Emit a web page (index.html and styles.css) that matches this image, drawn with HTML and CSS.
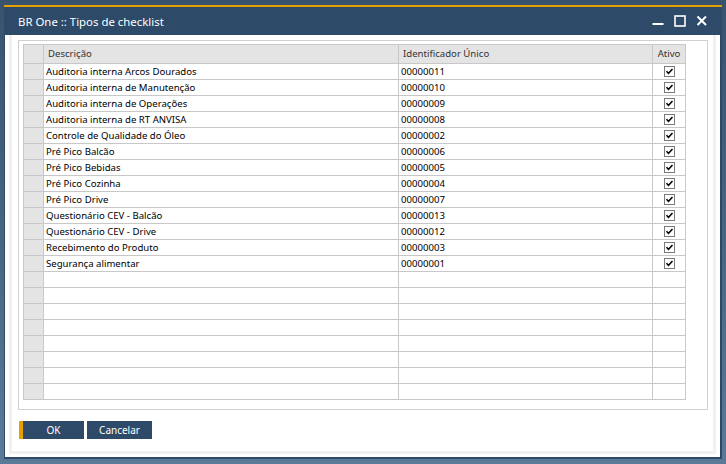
FILE: index.html
```html
<!DOCTYPE html>
<html lang="pt">
<head>
<meta charset="utf-8">
<title>BR One :: Tipos de checklist</title>
<link rel="stylesheet" href="styles.css">
</head>
<body>
<div class="window">
  <div class="titlebar">
    <span class="title">BR One :: Tipos de checklist</span>
    <div class="controls">
      <svg class="ctl" width="12" height="12" viewBox="0 0 12 12"><rect x="0.5" y="8" width="11" height="2" fill="#fff"/></svg>
      <svg class="ctl" width="12" height="12" viewBox="0 0 12 12"><rect x="1" y="1" width="10" height="10" fill="none" stroke="#fff" stroke-width="1.6"/></svg>
      <svg class="ctl" width="12" height="12" viewBox="0 0 12 12"><path d="M1.5 1.5 L10 10 M10 1.5 L1.5 10" stroke="#fff" stroke-width="2" fill="none"/></svg>
    </div>
  </div>
  <div class="client">
    <div class="frame">
      <div class="gridbox">
        <div class="grid">
          <div class="cell rh"></div>
          <div class="cell hd">Descrição</div>
          <div class="cell hd">Identificador Único</div>
          <div class="cell hd center">Ativo</div>

          <div class="cell rh"></div><div class="cell">Auditoria interna Arcos Dourados</div><div class="cell">00000011</div><div class="cell chk"><svg class="cb" width="11" height="11" viewBox="0 0 11 11"><rect x="0.5" y="0.5" width="10" height="10" fill="#fff" stroke="#7a7a7a"/><path d="M2.5 5.2 L4.5 7.3 L8.5 3" fill="none" stroke="#000" stroke-width="1.5"/></svg></div>
          <div class="cell rh"></div><div class="cell">Auditoria interna de Manutenção</div><div class="cell">00000010</div><div class="cell chk"><svg class="cb" width="11" height="11" viewBox="0 0 11 11"><rect x="0.5" y="0.5" width="10" height="10" fill="#fff" stroke="#7a7a7a"/><path d="M2.5 5.2 L4.5 7.3 L8.5 3" fill="none" stroke="#000" stroke-width="1.5"/></svg></div>
          <div class="cell rh"></div><div class="cell">Auditoria interna de Operações</div><div class="cell">00000009</div><div class="cell chk"><svg class="cb" width="11" height="11" viewBox="0 0 11 11"><rect x="0.5" y="0.5" width="10" height="10" fill="#fff" stroke="#7a7a7a"/><path d="M2.5 5.2 L4.5 7.3 L8.5 3" fill="none" stroke="#000" stroke-width="1.5"/></svg></div>
          <div class="cell rh"></div><div class="cell">Auditoria interna de RT ANVISA</div><div class="cell">00000008</div><div class="cell chk"><svg class="cb" width="11" height="11" viewBox="0 0 11 11"><rect x="0.5" y="0.5" width="10" height="10" fill="#fff" stroke="#7a7a7a"/><path d="M2.5 5.2 L4.5 7.3 L8.5 3" fill="none" stroke="#000" stroke-width="1.5"/></svg></div>
          <div class="cell rh"></div><div class="cell">Controle de Qualidade do Óleo</div><div class="cell">00000002</div><div class="cell chk"><svg class="cb" width="11" height="11" viewBox="0 0 11 11"><rect x="0.5" y="0.5" width="10" height="10" fill="#fff" stroke="#7a7a7a"/><path d="M2.5 5.2 L4.5 7.3 L8.5 3" fill="none" stroke="#000" stroke-width="1.5"/></svg></div>
          <div class="cell rh"></div><div class="cell">Pré Pico Balcão</div><div class="cell">00000006</div><div class="cell chk"><svg class="cb" width="11" height="11" viewBox="0 0 11 11"><rect x="0.5" y="0.5" width="10" height="10" fill="#fff" stroke="#7a7a7a"/><path d="M2.5 5.2 L4.5 7.3 L8.5 3" fill="none" stroke="#000" stroke-width="1.5"/></svg></div>
          <div class="cell rh"></div><div class="cell">Pré Pico Bebidas</div><div class="cell">00000005</div><div class="cell chk"><svg class="cb" width="11" height="11" viewBox="0 0 11 11"><rect x="0.5" y="0.5" width="10" height="10" fill="#fff" stroke="#7a7a7a"/><path d="M2.5 5.2 L4.5 7.3 L8.5 3" fill="none" stroke="#000" stroke-width="1.5"/></svg></div>
          <div class="cell rh"></div><div class="cell">Pré Pico Cozinha</div><div class="cell">00000004</div><div class="cell chk"><svg class="cb" width="11" height="11" viewBox="0 0 11 11"><rect x="0.5" y="0.5" width="10" height="10" fill="#fff" stroke="#7a7a7a"/><path d="M2.5 5.2 L4.5 7.3 L8.5 3" fill="none" stroke="#000" stroke-width="1.5"/></svg></div>
          <div class="cell rh"></div><div class="cell">Pré Pico Drive</div><div class="cell">00000007</div><div class="cell chk"><svg class="cb" width="11" height="11" viewBox="0 0 11 11"><rect x="0.5" y="0.5" width="10" height="10" fill="#fff" stroke="#7a7a7a"/><path d="M2.5 5.2 L4.5 7.3 L8.5 3" fill="none" stroke="#000" stroke-width="1.5"/></svg></div>
          <div class="cell rh"></div><div class="cell">Questionário CEV - Balcão</div><div class="cell">00000013</div><div class="cell chk"><svg class="cb" width="11" height="11" viewBox="0 0 11 11"><rect x="0.5" y="0.5" width="10" height="10" fill="#fff" stroke="#7a7a7a"/><path d="M2.5 5.2 L4.5 7.3 L8.5 3" fill="none" stroke="#000" stroke-width="1.5"/></svg></div>
          <div class="cell rh"></div><div class="cell">Questionário CEV - Drive</div><div class="cell">00000012</div><div class="cell chk"><svg class="cb" width="11" height="11" viewBox="0 0 11 11"><rect x="0.5" y="0.5" width="10" height="10" fill="#fff" stroke="#7a7a7a"/><path d="M2.5 5.2 L4.5 7.3 L8.5 3" fill="none" stroke="#000" stroke-width="1.5"/></svg></div>
          <div class="cell rh"></div><div class="cell">Recebimento do Produto</div><div class="cell">00000003</div><div class="cell chk"><svg class="cb" width="11" height="11" viewBox="0 0 11 11"><rect x="0.5" y="0.5" width="10" height="10" fill="#fff" stroke="#7a7a7a"/><path d="M2.5 5.2 L4.5 7.3 L8.5 3" fill="none" stroke="#000" stroke-width="1.5"/></svg></div>
          <div class="cell rh"></div><div class="cell">Segurança alimentar</div><div class="cell">00000001</div><div class="cell chk"><svg class="cb" width="11" height="11" viewBox="0 0 11 11"><rect x="0.5" y="0.5" width="10" height="10" fill="#fff" stroke="#7a7a7a"/><path d="M2.5 5.2 L4.5 7.3 L8.5 3" fill="none" stroke="#000" stroke-width="1.5"/></svg></div>

          <div class="cell rh"></div><div class="cell"></div><div class="cell"></div><div class="cell"></div>
          <div class="cell rh"></div><div class="cell"></div><div class="cell"></div><div class="cell"></div>
          <div class="cell rh"></div><div class="cell"></div><div class="cell"></div><div class="cell"></div>
          <div class="cell rh"></div><div class="cell"></div><div class="cell"></div><div class="cell"></div>
          <div class="cell rh"></div><div class="cell"></div><div class="cell"></div><div class="cell"></div>
          <div class="cell rh"></div><div class="cell"></div><div class="cell"></div><div class="cell"></div>
          <div class="cell rh"></div><div class="cell"></div><div class="cell"></div><div class="cell"></div>
          <div class="cell rh"></div><div class="cell"></div><div class="cell"></div><div class="cell"></div>
        </div>
      </div>
      <div class="buttons">
        <button class="btn primary">OK</button>
        <button class="btn">Cancelar</button>
      </div>
    </div>
  </div>
</div>
</body>
</html>
```
FILE: styles.css
```css
html, body {
  margin: 0;
  padding: 0;
}
body {
  width: 726px;
  height: 464px;
  overflow: hidden;
  background: linear-gradient(180deg, #38536d 0%, #48657f 50%, #5a7a98 100%);
  font-family: "Noto Sans", "DejaVu Sans", sans-serif;
}
.window {
  margin: 5px 0 0 4px;
  width: 718px;
  height: 454px;
  display: flex;
  flex-direction: column;
}
.titlebar {
  height: 28px;
  border-top: 2px solid #e3a000;
  background: #2d4a69;
  display: flex;
  align-items: center;
  justify-content: space-between;
  box-sizing: content-box;
}
.title {
  color: #fff;
  font-size: 11.4px;
  padding-left: 14px;
}
.controls {
  display: flex;
  gap: 10px;
  padding-right: 14px;
  align-items: center;
}
.ctl { display: block; }
.client {
  flex: 1;
  background: #fff;
  border-left: 1px solid #2c4a67;
  border-right: 2px solid #2c4a67;
  border-bottom: 2px solid #2c4a67;
  padding: 0 4px 3px 4px;
  display: flex;
  flex-direction: column;
}
.frame {
  flex: 1;
  background: #fff;
  border: 3px solid #f0f0f0;
  border-top: 0;
}
.gridbox {
  margin: 5px 5px 0 6px;
  border: 1px solid #d0d0d0;
  padding: 3px 0 9px 4px;
}
.grid {
  display: grid;
  grid-template-columns: 19px 354px 253px 32px;
  grid-template-rows: 18px;
  grid-auto-rows: 15px;
  gap: 1px;
  padding: 1px;
  width: fit-content;
  background: #c8c8c8;
}
.cell {
  background: #fff;
  font-size: 9.6px;
  line-height: 16px;
  color: #000;
  padding-left: 2px;
  white-space: nowrap;
  overflow: hidden;
}
.cell.rh { background: #e4e4e4; padding: 0; }
.cell.hd {
  background: #e4e4e4;
  color: #333;
  line-height: 18px;
  padding-left: 4px;
}
.cell.center { text-align: center; padding-left: 0; }
.cell.chk {
  padding: 0;
  display: flex;
  align-items: center;
  justify-content: center;
}
.cb { display: block; }
.buttons {
  display: flex;
  gap: 3px;
  margin: 11px 0 0 7px;
}
.btn {
  width: 65px;
  height: 18px;
  border: 0;
  padding: 0;
  background: #2d4a69;
  color: #fff;
  font-family: "Noto Sans", "DejaVu Sans", sans-serif;
  font-size: 10px;
}
.btn.primary {
  border-left: 4px solid #e3a000;
}
```
